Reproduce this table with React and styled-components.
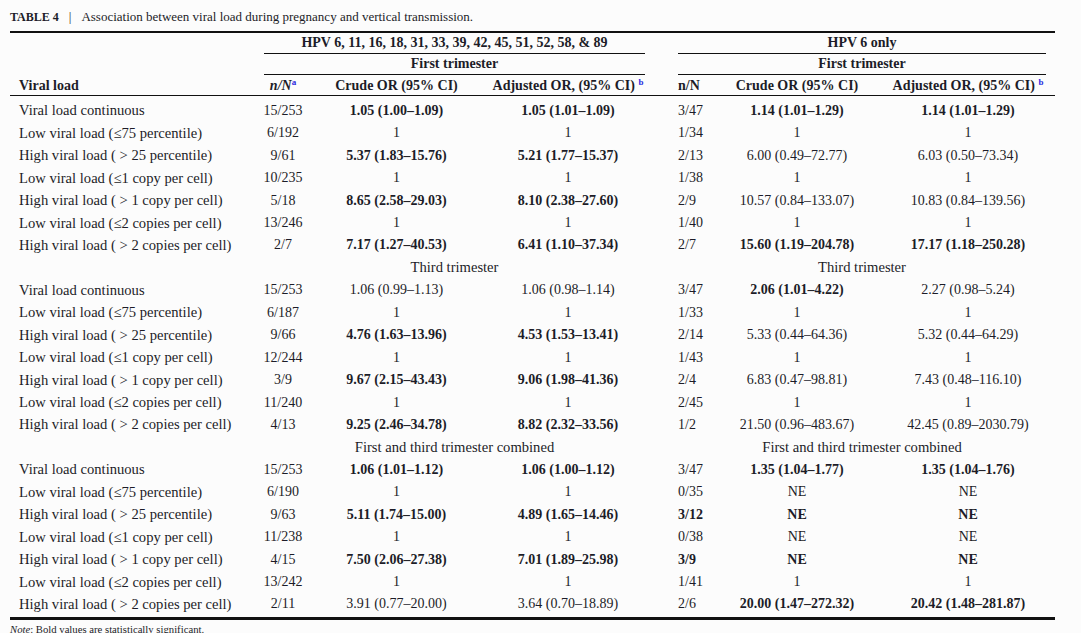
import React from 'react';
import styled, { createGlobalStyle } from 'styled-components';

const GlobalStyle = createGlobalStyle`
  html, body {
    margin: 0;
    padding: 0;
    background: #fcfcfc;
  }
  body {
    font-family: "Liberation Serif", "Times New Roman", serif;
    color: #1c1c28;
    overflow: hidden;
  }
`;

// column widths taken from the reference: label | n/N | crude | adjusted | gap | n/N | crude | adjusted
const COLS = '254px 38px 189px 154px 33px 59px 120px 198px';

const Page = styled.div`
  padding: 8px 10px 0;
`;

const Caption = styled.div`
  font-size: 13px;
  line-height: 18px;
  margin-bottom: 5px;
  white-space: nowrap;
`;

const CaptionLabel = styled.span`
  font-weight: 700;
  font-size: 12px;
`;

const CaptionBar = styled.span`
  margin: 0 10px 0 10px;
`;

const Table = styled.div`
  width: 1045px;
  border-top: 2px solid #111;
  font-size: 14px;
`;

const Row = styled.div`
  display: grid;
  grid-template-columns: ${COLS};
  height: ${p => p.$h || 22.45}px;
  align-items: center;
`;

const HeadRow = styled(Row)`
  box-sizing: border-box;
  height: 21px;
  padding-top: 2px;
  border-bottom: 1px solid #111;
  font-weight: 700;
`;

const GroupHead = styled.div`
  grid-column: ${p => p.$span};
  box-sizing: border-box;
  height: 21px;
  margin-right: ${p => p.$mr || 0}px;
  border-bottom: 1px solid #111;
  display: flex;
  align-items: center;
  justify-content: center;
  font-weight: 700;
  white-space: nowrap;
`;

const Section = styled.div`
  grid-column: ${p => p.$span};
  margin-right: ${p => p.$mr || 0}px;
  display: flex;
  justify-content: center;
  font-size: 14.6px;
  white-space: nowrap;
`;

const Body = styled.div`
  padding: 3.6px 0 1.6px;
  border-bottom: 3px solid #111;
`;

const Cell = styled.div`
  display: flex;
  justify-content: ${p => (p.$left ? 'flex-start' : 'center')};
  padding-left: ${p => p.$pl || 0}px;
  ${p => p.$bold && 'font-weight: 700;'}
  white-space: nowrap;
`;

const LabelCell = styled(Cell)`
  font-size: ${p => (p.$head ? 14 : 14.6)}px;
`;

const Gap = styled.div``;

const Sup = styled.sup`
  font-size: 9px;
  line-height: 0;
  color: #2b2be0;
  vertical-align: 5px;
`;

const Note = styled.div`
  font-size: 10.7px;
  line-height: 14px;
  margin-top: 1.5px;
`;

const C = ({ children, ...rest }) => (
  <Cell {...rest}>
    <span>{children}</span>
  </Cell>
);

const labels = [
  'Viral load continuous',
  'Low viral load (\u226475 percentile)',
  'High viral load ( > 25 percentile)',
  'Low viral load (\u22641 copy per cell)',
  'High viral load ( > 1 copy per cell)',
  'Low viral load (\u22642 copies per cell)',
  'High viral load ( > 2 copies per cell)',
];

// [n/N, crude, adjusted, n/N, crude, adjusted]; a leading '*' marks a bold value
const sections = [
  {
    title: null,
    rows: [
      ['15/253', '*1.05 (1.00–1.09)', '*1.05 (1.01–1.09)', '3/47', '*1.14 (1.01–1.29)', '*1.14 (1.01–1.29)'],
      ['6/192', '1', '1', '1/34', '1', '1'],
      ['9/61', '*5.37 (1.83–15.76)', '*5.21 (1.77–15.37)', '2/13', '6.00 (0.49–72.77)', '6.03 (0.50–73.34)'],
      ['10/235', '1', '1', '1/38', '1', '1'],
      ['5/18', '*8.65 (2.58–29.03)', '*8.10 (2.38–27.60)', '2/9', '10.57 (0.84–133.07)', '10.83 (0.84–139.56)'],
      ['13/246', '1', '1', '1/40', '1', '1'],
      ['2/7', '*7.17 (1.27–40.53)', '*6.41 (1.10–37.34)', '2/7', '*15.60 (1.19–204.78)', '*17.17 (1.18–250.28)'],
    ],
  },
  {
    title: 'Third trimester',
    rows: [
      ['15/253', '1.06 (0.99–1.13)', '1.06 (0.98–1.14)', '3/47', '*2.06 (1.01–4.22)', '2.27 (0.98–5.24)'],
      ['6/187', '1', '1', '1/33', '1', '1'],
      ['9/66', '*4.76 (1.63–13.96)', '*4.53 (1.53–13.41)', '2/14', '5.33 (0.44–64.36)', '5.32 (0.44–64.29)'],
      ['12/244', '1', '1', '1/43', '1', '1'],
      ['3/9', '*9.67 (2.15–43.43)', '*9.06 (1.98–41.36)', '2/4', '6.83 (0.47–98.81)', '7.43 (0.48–116.10)'],
      ['11/240', '1', '1', '2/45', '1', '1'],
      ['4/13', '*9.25 (2.46–34.78)', '*8.82 (2.32–33.56)', '1/2', '21.50 (0.96–483.67)', '42.45 (0.89–2030.79)'],
    ],
  },
  {
    title: 'First and third trimester combined',
    rows: [
      ['15/253', '*1.06 (1.01–1.12)', '*1.06 (1.00–1.12)', '3/47', '*1.35 (1.04–1.77)', '*1.35 (1.04–1.76)'],
      ['6/190', '1', '1', '0/35', 'NE', 'NE'],
      ['9/63', '*5.11 (1.74–15.00)', '*4.89 (1.65–14.46)', '*3/12', '*NE', '*NE'],
      ['11/238', '1', '1', '0/38', 'NE', 'NE'],
      ['4/15', '*7.50 (2.06–27.38)', '*7.01 (1.89–25.98)', '*3/9', '*NE', '*NE'],
      ['13/242', '1', '1', '1/41', '1', '1'],
      ['2/11', '3.91 (0.77–20.00)', '3.64 (0.70–18.89)', '2/6', '*20.00 (1.47–272.32)', '*20.42 (1.48–281.87)'],
    ],
  },
];

const val = v => (v.startsWith('*') ? { text: v.slice(1), bold: true } : { text: v, bold: false });

const DataRow = ({ label, cells }) => {
  const [a, b, c, d, e, f] = cells.map(val);
  return (
    <Row>
      <LabelCell $left $pl={9}><span>{label}</span></LabelCell>
      <C $bold={a.bold}>{a.text}</C>
      <C $bold={b.bold}>{b.text}</C>
      <C $bold={c.bold}>{c.text}</C>
      <Gap />
      <C $left $bold={d.bold}>{d.text}</C>
      <C $bold={e.bold}>{e.text}</C>
      <C $pl={24} $bold={f.bold}>{f.text}</C>
    </Row>
  );
};

export default function App() {
  return (
    <Page>
      <GlobalStyle />
      <Caption>
        <CaptionLabel>TABLE 4</CaptionLabel>
        <CaptionBar>|</CaptionBar>
        Association between viral load during pregnancy and vertical transmission.
      </Caption>
      <Table>
        <Row $h={21}>
          <GroupHead $span="2 / 5">HPV 6, 11, 16, 18, 31, 33, 39, 42, 45, 51, 52, 58, &amp; 89</GroupHead>
          <GroupHead $span="6 / 9" $mr={9}>HPV 6 only</GroupHead>
        </Row>
        <Row $h={21}>
          <GroupHead $span="2 / 5">First trimester</GroupHead>
          <GroupHead $span="6 / 9" $mr={9}>First trimester</GroupHead>
        </Row>
        <HeadRow>
          <LabelCell $left $pl={9} $head><span>Viral load</span></LabelCell>
          <C><i>n/N</i><Sup>a</Sup></C>
          <C>Crude OR (95% CI)</C>
          <C>Adjusted OR, (95% CI) <Sup>b</Sup></C>
          <Gap />
          <C $left>n/N</C>
          <C>Crude OR (95% CI)</C>
          <C $pl={24}>Adjusted OR, (95% CI) <Sup>b</Sup></C>
        </HeadRow>
        <Body>
          {sections.map((s, si) => (
            <React.Fragment key={si}>
              {s.title && (
                <Row>
                  <Section $span="2 / 5">{s.title}</Section>
                  <Section $span="6 / 9" $mr={9}>{s.title}</Section>
                </Row>
              )}
              {s.rows.map((r, ri) => (
                <DataRow key={ri} label={labels[ri]} cells={r} />
              ))}
            </React.Fragment>
          ))}
        </Body>
      </Table>
      <Note>
        <i>Note</i>: Bold values are statistically significant.
      </Note>
    </Page>
  );
}
